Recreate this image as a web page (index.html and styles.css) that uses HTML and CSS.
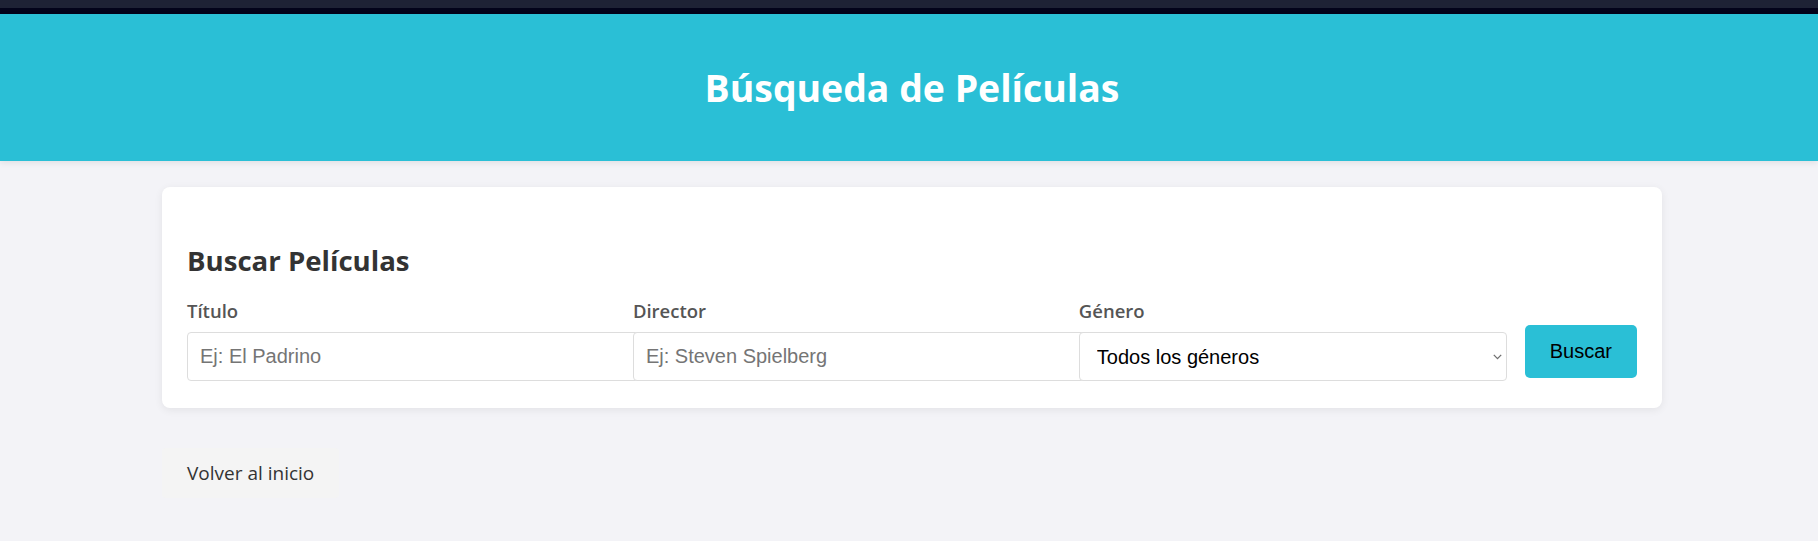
FILE: index.html
```html
<!DOCTYPE html>
<html lang="es">
<head>
<meta charset="utf-8">
<title>Búsqueda de Películas</title>
<link rel="stylesheet" href="styles.css">
</head>
<body>
<div class="chrome-top"></div>
<div class="chrome-line"></div>
<header class="hero">
  <h1 class="hero-title">Búsqueda de Películas</h1>
</header>
<main class="container">
  <section class="card">
    <h2 class="card-title">Buscar Películas</h2>
    <form class="search-form">
      <div class="field">
        <label class="field-label" for="titulo">Título</label>
        <input class="field-input" id="titulo" type="text" placeholder="Ej: El Padrino">
      </div>
      <div class="field">
        <label class="field-label" for="director">Director</label>
        <input class="field-input" id="director" type="text" placeholder="Ej: Steven Spielberg">
      </div>
      <div class="field">
        <label class="field-label" for="genero">Género</label>
        <div class="select-wrap">
          <select class="field-select" id="genero">
            <option>Todos los géneros</option>
          </select>
          <svg class="select-arrow" width="9" height="6" viewBox="0 0 9 6" aria-hidden="true">
            <path d="M0.8 0.9 L4.5 4.6 L8.2 0.9" fill="none" stroke="#6f6f6f" stroke-width="1.3"/>
          </svg>
        </div>
      </div>
      <button class="search-btn" type="button">Buscar</button>
    </form>
  </section>
  <a class="back-btn" href="#">Volver al inicio</a>
</main>
</body>
</html>
```

FILE: styles.css
```css
html, body {
  margin: 0;
  padding: 0;
}
body {
  background: #f3f3f7;
  font-family: "Open Sans", "Noto Sans", sans-serif;
  color: #333;
}
.chrome-top {
  height: 8px;
  background: #1e2235;
}
.chrome-line {
  height: 6px;
  background: #03031a;
}
.hero {
  height: 147px;
  padding-left: 6px;
  background: #2abfd6;
  display: flex;
  align-items: center;
  justify-content: center;
  box-shadow: 0 2px 6px rgba(0, 0, 0, 0.08);
}
.hero-title {
  margin: 0;
  color: #fff;
  font-size: 37.4px;
  font-weight: 700;
}
.container {
  width: 1500px;
  margin: 0 auto;
  padding: 26px 0 0 6px;
  box-sizing: content-box;
}
.card {
  background: #fff;
  border-radius: 8px;
  padding: 25px 25px 27px;
  box-shadow: 0 2px 8px rgba(0, 0, 0, 0.07);
}
.card-title {
  margin: 29px 0 19px;
  font-size: 27.6px;
  font-weight: 700;
  color: #333;
}
.search-form {
  display: grid;
  grid-template-columns: 1fr 1fr 1fr auto;
  gap: 18px;
  align-items: end;
}
.field {
  display: flex;
  flex-direction: column;
  min-width: 0;
}
.field-label {
  font-size: 18.5px;
  font-weight: 600;
  color: #555;
  margin-bottom: 9px;
}
.field-input,
.field-select {
  font-family: "Liberation Sans", Arial, sans-serif;
  font-size: 20px;
  padding: 12px;
  border: 1px solid #ddd;
  border-radius: 4px;
  background: #fff;
  color: #000;
}
.field-input {
  width: 100%;
  box-sizing: content-box;
}
.field-input::placeholder {
  color: #757575;
}
.select-wrap {
  position: relative;
}
.field-select {
  display: block;
  width: 100%;
  box-sizing: border-box;
  height: 49px;
  padding-left: 17px;
  -webkit-appearance: none;
  appearance: none;
}
.select-arrow {
  position: absolute;
  right: 5px;
  top: 22px;
  pointer-events: none;
}
.search-btn {
  font-family: "Liberation Sans", Arial, sans-serif;
  font-size: 20px;
  color: #000;
  background: #2abfd6;
  border: none;
  border-radius: 5px;
  padding: 15px 25px;
  margin-bottom: 3px;
}
.back-btn {
  display: inline-block;
  margin-top: 40px;
  padding: 12px 25px;
  background: #f4f4f4;
  border-radius: 4px;
  color: #333;
  text-decoration: none;
  font-size: 19px;
}
```
